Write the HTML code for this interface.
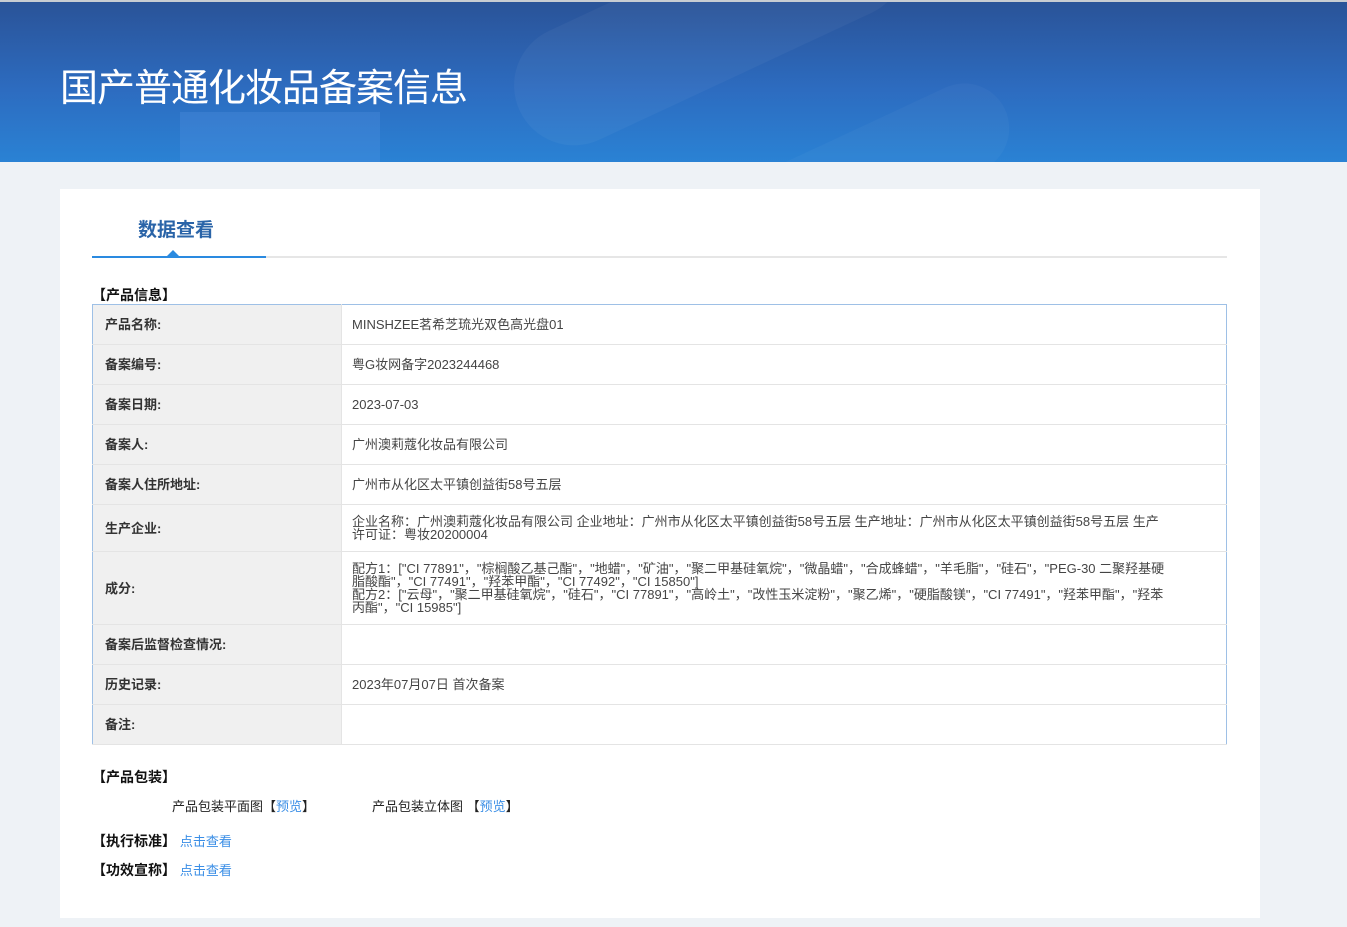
<!DOCTYPE html>
<html><head><meta charset="utf-8"><style>
*{margin:0;padding:0;box-sizing:border-box}
body{width:1347px;height:927px;overflow:hidden;background:#eef2f6;font-family:"Liberation Sans","Noto Sans CJK SC",sans-serif;font-size:13px;color:#333;position:relative}
.hd{position:absolute;left:0;top:2px;width:1347px;height:160px;background:linear-gradient(180deg,#2a5398 0%,#2d6cc0 55%,#2a82d4 100%);overflow:hidden}
.topl{position:absolute;left:0;top:0;width:1347px;height:2px;background:#c8ccd2}
.hd h1{position:absolute;left:60px;top:64px;font-size:38px;font-weight:normal;color:#fff;letter-spacing:-1px;line-height:46px}
.deco1{position:absolute;left:500px;top:-40px;width:420px;height:120px;border-radius:60px;background:rgba(255,255,255,.04);transform:rotate(-25deg)}
.deco2{position:absolute;left:180px;top:110px;width:200px;height:60px;background:rgba(90,150,230,.25)}
.deco3{position:absolute;left:700px;top:130px;width:320px;height:90px;border-radius:45px;background:rgba(255,255,255,.03);transform:rotate(-25deg)}
.card{position:absolute;left:60px;top:189px;width:1200px;height:729px;background:#fff}
.tab{position:absolute;left:78px;top:26px;font-size:19px;font-weight:bold;color:#2a64a8}
.tl{position:absolute;left:32px;top:67px;width:1135px;height:2px;background:#e6e6e6}
.tlb{position:absolute;left:32px;top:67px;width:174px;height:2px;background:#2a8ae0}
.tri{position:absolute;left:107px;top:61px;width:0;height:0;border-left:6px solid transparent;border-right:6px solid transparent;border-bottom:6px solid #2a8ae0}
.sec{position:absolute;font-weight:bold;color:#111;font-size:14px}
table{position:absolute;left:32px;top:115px;width:1135px;border-collapse:collapse;border:1px solid #9ec0e6}
td{border-bottom:1px solid #e4e4e4;height:40px;vertical-align:middle;line-height:13px}
td.l{width:249px;background:#f0f0f0;font-weight:bold;color:#333;padding-left:12px;border-right:1px solid #e4e4e4}
td.v{padding-left:10px;padding-right:60px;color:#444}
a{color:#3a8ee6;text-decoration:none}
.row{position:absolute;font-size:13px;color:#222}
</style></head><body>
<div class="topl"></div>
<div class="hd"><div class="deco1"></div><div class="deco2"></div><div class="deco3"></div><h1>国产普通化妆品备案信息</h1></div>
<div class="card">
<div class="tab">数据查看</div>
<div class="tl"></div><div class="tlb"></div><div class="tri"></div>
<div class="sec" style="left:32px;top:96px">【产品信息】</div>
<table>
<tr><td class="l">产品名称:</td><td class="v">MINSHZEE茗希芝琉光双色高光盘01</td></tr>
<tr><td class="l">备案编号:</td><td class="v">粤G妆网备字2023244468</td></tr>
<tr><td class="l">备案日期:</td><td class="v">2023-07-03</td></tr>
<tr><td class="l">备案人:</td><td class="v">广州澳莉蔻化妆品有限公司</td></tr>
<tr><td class="l">备案人住所地址:</td><td class="v">广州市从化区太平镇创益街58号五层</td></tr>
<tr><td class="l" style="height:47px">生产企业:</td><td class="v">企业名称：广州澳莉蔻化妆品有限公司 企业地址：广州市从化区太平镇创益街58号五层 生产地址：广州市从化区太平镇创益街58号五层 生产许可证：粤妆20200004</td></tr>
<tr><td class="l" style="height:73px">成分:</td><td class="v">配方1：["CI 77891"，"棕榈酸乙基己酯"，"地蜡"，"矿油"，"聚二甲基硅氧烷"，"微晶蜡"，"合成蜂蜡"，"羊毛脂"，"硅石"，"PEG-30 二聚羟基硬脂酸酯"，"CI 77491"，"羟苯甲酯"，"CI 77492"，"CI 15850"]<br>配方2：["云母"，"聚二甲基硅氧烷"，"硅石"，"CI 77891"，"高岭土"，"改性玉米淀粉"，"聚乙烯"，"硬脂酸镁"，"CI 77491"，"羟苯甲酯"，"羟苯丙酯"，"CI 15985"]</td></tr>
<tr><td class="l">备案后监督检查情况:</td><td class="v"></td></tr>
<tr><td class="l">历史记录:</td><td class="v">2023年07月07日 首次备案</td></tr>
<tr><td class="l">备注:</td><td class="v"></td></tr>
</table>
<div class="sec" style="left:32px;top:578px">【产品包装】</div>
<div class="row" style="left:112px;top:607px">产品包装平面图【<a>预览</a>】</div>
<div class="row" style="left:312px;top:607px">产品包装立体图 【<a>预览</a>】</div>
<div class="sec" style="left:32px;top:642px">【执行标准】 <a style="font-weight:normal;font-size:13px">点击查看</a></div>
<div class="sec" style="left:32px;top:671px">【功效宣称】 <a style="font-weight:normal;font-size:13px">点击查看</a></div>
</div>
</body></html>
